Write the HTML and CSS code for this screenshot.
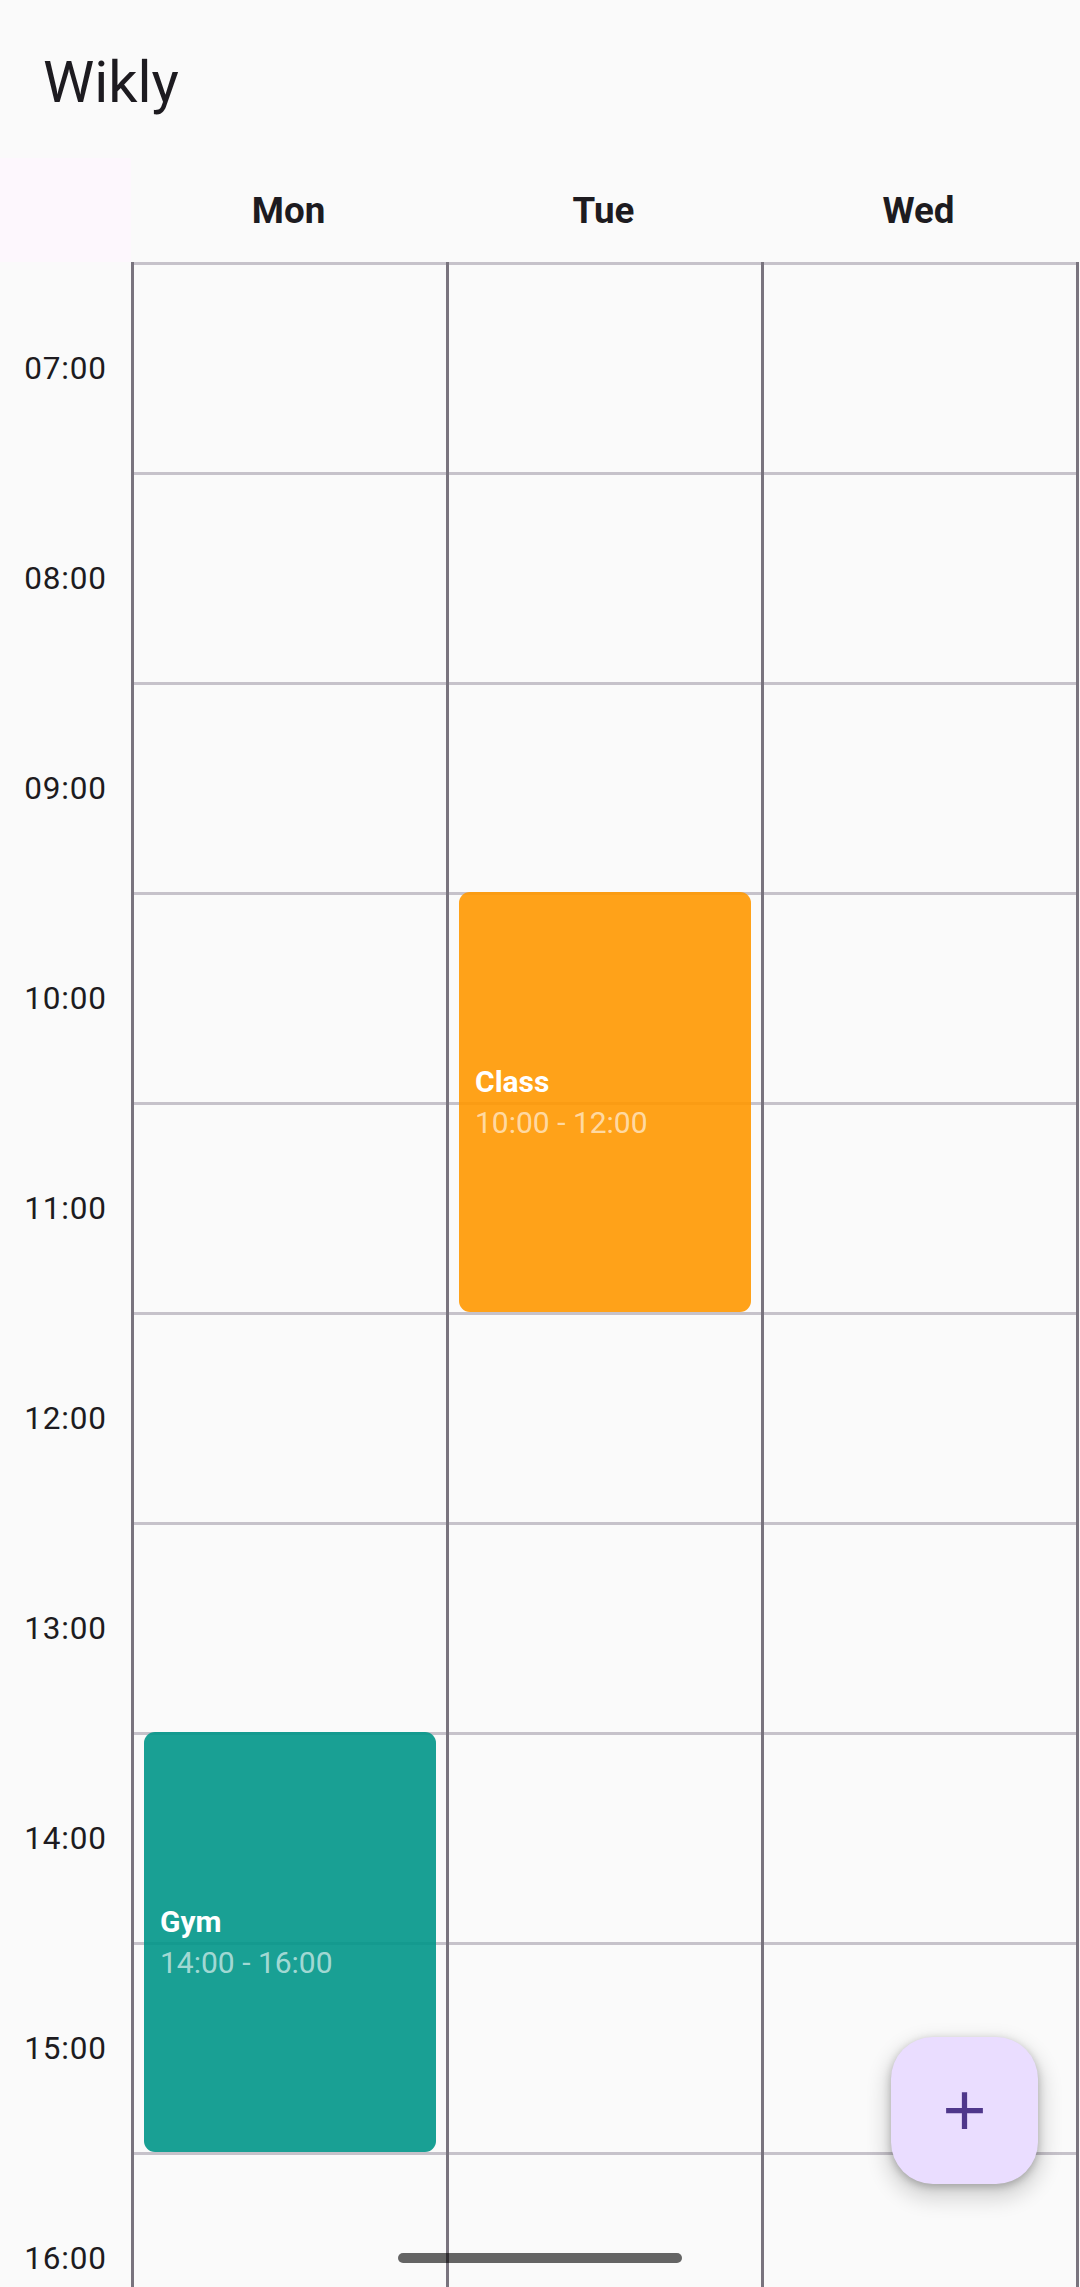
FILE: index.html
```html
<!DOCTYPE html>
<html lang="en">
<head>
<meta charset="utf-8">
<title>Wikly</title>
<link rel="stylesheet" href="styles.css">
</head>
<body>
<div class="app">
  <header class="appbar">Wikly</header>

  <div class="head-row">
    <div class="corner"></div>
    <div class="day-name">Mon</div>
    <div class="day-name">Tue</div>
    <div class="day-name">Wed</div>
  </div>

  <div class="schedule">
    <div class="times">
      <div class="time">07:00</div>
      <div class="time">08:00</div>
      <div class="time">09:00</div>
      <div class="time">10:00</div>
      <div class="time">11:00</div>
      <div class="time">12:00</div>
      <div class="time">13:00</div>
      <div class="time">14:00</div>
      <div class="time">15:00</div>
      <div class="time">16:00</div>
      <div class="time">17:00</div>
    </div>

    <div class="day">
      <div class="slot"></div><div class="slot"></div><div class="slot"></div><div class="slot"></div>
      <div class="slot"></div><div class="slot"></div><div class="slot"></div><div class="slot"></div>
      <div class="slot"></div><div class="slot"></div><div class="slot"></div>
      <div class="event event-teal" style="top: 1470px; height: 420px;">
        <div class="event-title">Gym</div>
        <div class="event-time">14:00 - 16:00</div>
      </div>
    </div>

    <div class="day">
      <div class="slot"></div><div class="slot"></div><div class="slot"></div><div class="slot"></div>
      <div class="slot"></div><div class="slot"></div><div class="slot"></div><div class="slot"></div>
      <div class="slot"></div><div class="slot"></div><div class="slot"></div>
      <div class="event event-orange" style="top: 630px; height: 420px;">
        <div class="event-title">Class</div>
        <div class="event-time">10:00 - 12:00</div>
      </div>
    </div>

    <div class="day day-last">
      <div class="slot"></div><div class="slot"></div><div class="slot"></div><div class="slot"></div>
      <div class="slot"></div><div class="slot"></div><div class="slot"></div><div class="slot"></div>
      <div class="slot"></div><div class="slot"></div><div class="slot"></div>
    </div>
  </div>

  <button class="fab" aria-label="Add">
    <svg class="fab-icon" viewBox="0 0 24 24" width="63" height="63">
      <path d="M19 13h-6v6h-2v-6H5v-2h6V5h2v6h6v2z" fill="currentColor"/>
    </svg>
  </button>

  <div class="gesture-bar"></div>
</div>
</body>
</html>
```

FILE: styles.css
```css
html, body {
  margin: 0;
  padding: 0;
}

body {
  background: #fafafa;
  font-family: Roboto, "Noto Sans", "Liberation Sans", sans-serif;
  color: #1d1b20;
  width: 1080px;
  height: 2287px;
  overflow: hidden;
}

.app {
  width: 1080px;
  height: 2287px;
  overflow: hidden;
  position: relative;
}

.appbar {
  padding: 48px 0 42px 43px;
  font-size: 57.75px;
  font-weight: 400;
  line-height: normal;
  color: #1d1b20;
}

.head-row {
  display: grid;
  grid-template-columns: 131px 315px 315px 315px;
  height: 104px;
}

.corner {
  background: #fdf7fd;
}

.day-name {
  display: flex;
  align-items: center;
  justify-content: center;
  font-size: 36.75px;
  font-weight: 700;
  color: #1d1b20;
}

.schedule {
  display: flex;
  align-items: flex-start;
}

.times {
  width: 131px;
  flex: none;
}

.time {
  height: 210px;
  box-sizing: border-box;
  padding-top: 3px;
  display: flex;
  align-items: center;
  justify-content: center;
  font-size: 31.5px;
  letter-spacing: 0.8px;
  color: #1d1b20;
}

.day {
  width: 315px;
  flex: none;
  box-sizing: border-box;
  border-left: 3px solid #79747e;
  position: relative;
}

.day-last {
  width: 318px;
  border-right: 3px solid #79747e;
}

.slot {
  height: 210px;
  box-sizing: border-box;
  border-top: 3px solid #c6c2ca;
}

.event {
  position: absolute;
  left: 10px;
  right: 10px;
  box-sizing: border-box;
  border-radius: 11px;
  padding: 0 16px;
  display: flex;
  flex-direction: column;
  justify-content: center;
  gap: 6px;
}

.event-orange {
  background: rgba(255, 152, 0, 0.9);
}

.event-teal {
  background: rgba(0, 150, 136, 0.9);
}

.event-title {
  font-size: 30px;
  font-weight: 700;
  color: #ffffff;
  line-height: normal;
}

.event-time {
  font-size: 30px;
  font-weight: 400;
  color: rgba(255, 255, 255, 0.62);
  line-height: normal;
}

.fab {
  position: absolute;
  left: 891px;
  top: 2037px;
  width: 147px;
  height: 147px;
  border: none;
  padding: 0;
  border-radius: 42px;
  background: #eaddff;
  color: #4f378b;
  display: flex;
  align-items: center;
  justify-content: center;
  box-shadow: 0 10px 20px 6px rgba(0, 0, 0, 0.14), 0 3px 8px rgba(0, 0, 0, 0.25);
}

.fab-icon {
  display: block;
}

.gesture-bar {
  position: absolute;
  left: 398px;
  top: 2253px;
  width: 284px;
  height: 10px;
  border-radius: 5px;
  background: rgba(0, 0, 0, 0.6);
}
```
